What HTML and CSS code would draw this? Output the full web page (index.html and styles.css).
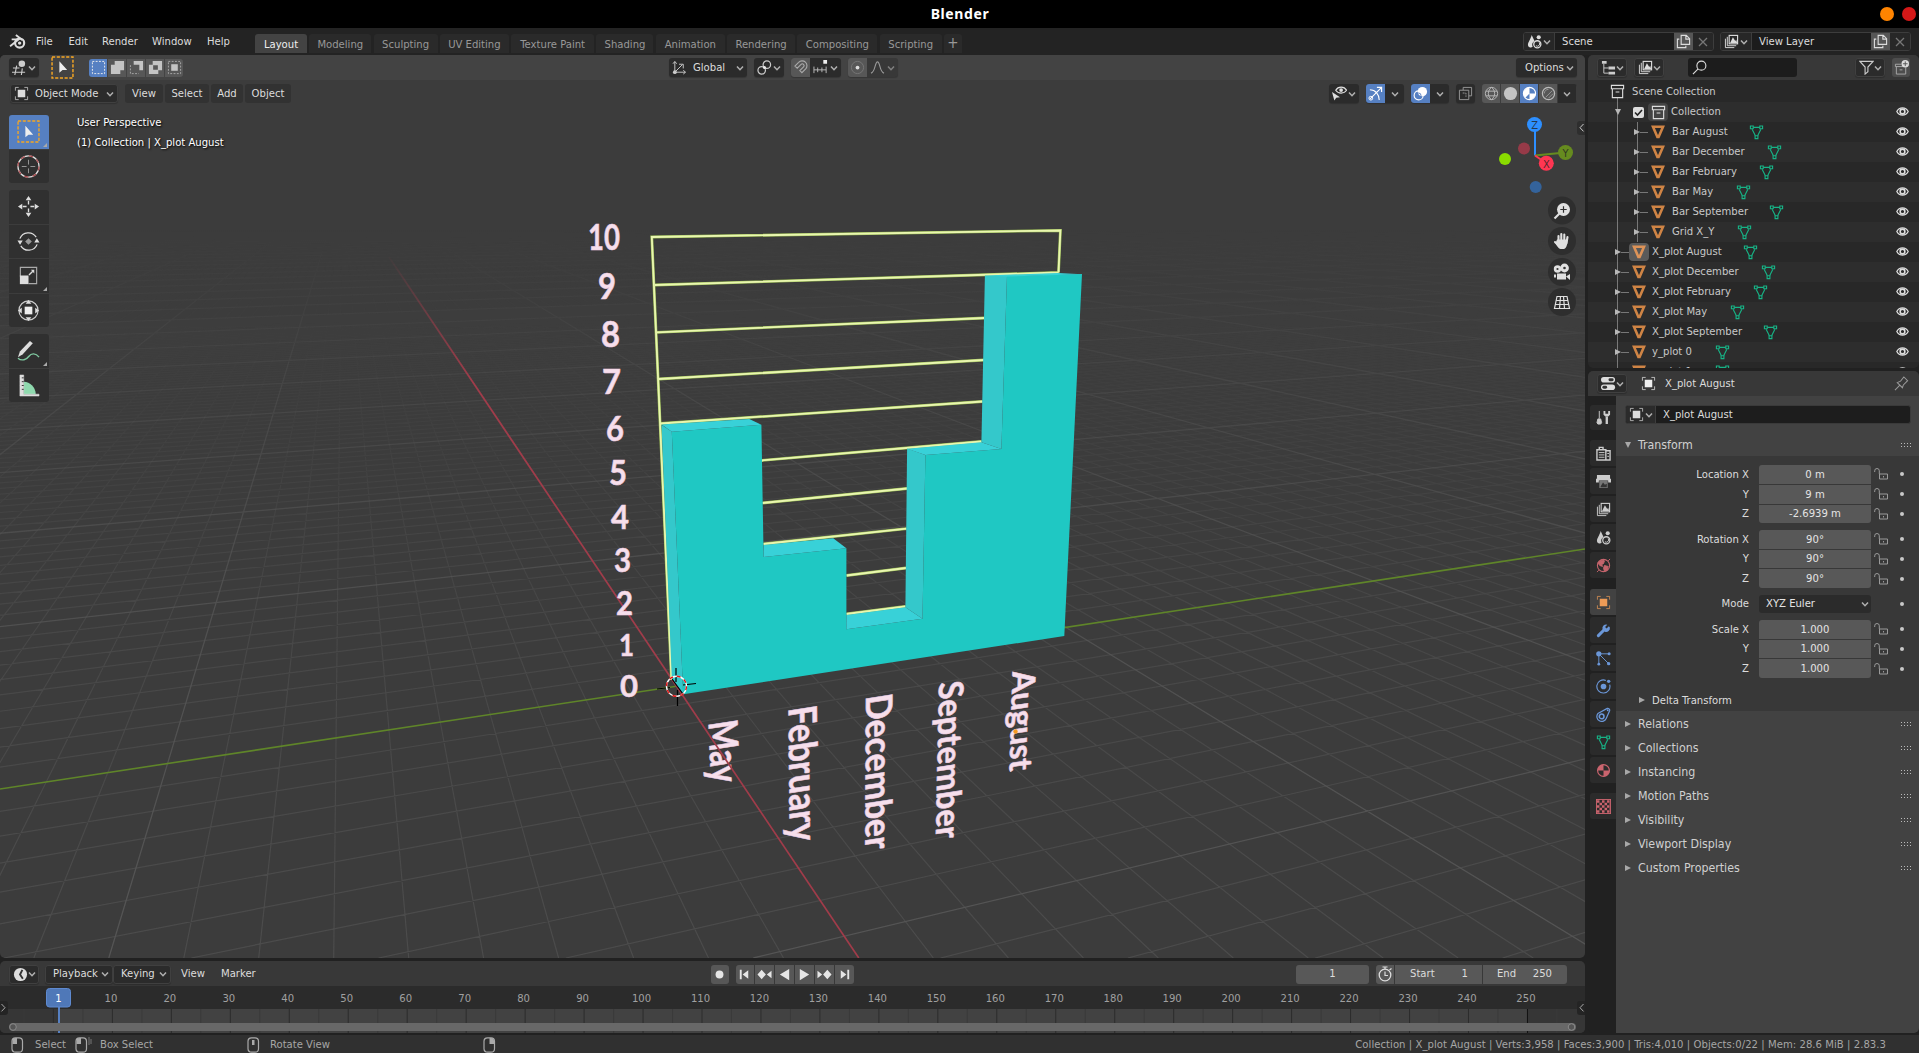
FILE: index.html
```html
<!DOCTYPE html>
<html lang="en">
<head>
<meta charset="utf-8">
<title>Blender</title>
<link rel="stylesheet" href="styles.css">
</head>
<body>
<svg class="defs" width="0" height="0">
  <symbol id="chev" viewBox="0 0 8 8"><path d="M1 2.500l3 3.200 3-3.200" fill="none" stroke="currentColor" stroke-width="1.500"/></symbol>
  <symbol id="scene" viewBox="0 0 16 16"><path d="M5 1C4 5 1 9 1 11.500a3 2.600 0 0 0 5 2.200A5 5 0 0 1 8 7.500z" fill="currentColor"/><circle cx="12.500" cy="3.500" r="2.200" fill="currentColor"/><circle cx="11" cy="11" r="3.800" fill="none" stroke="currentColor" stroke-width="1.400"/><path d="M9.500 12.500a2.500 2.500 0 0 0 3.500-3.500" fill="none" stroke="currentColor"/></symbol>
  <symbol id="layers" viewBox="0 0 16 16"><path d="M1.500 5v9.500H11M3.500 3v9.500H13" fill="none" stroke="currentColor"/><rect x="5.500" y="1.500" width="9" height="9" fill="none" stroke="currentColor" stroke-width="1.200"/><path d="M6.500 9.500l3-6 2.500 4 1-1.500 1 3.500z" fill="currentColor"/></symbol>
  <symbol id="copy" viewBox="0 0 16 16"><path d="M5.500 1.500h5.500l3.500 3.500v6h-9zM10.500 1.500v4h4" fill="none" stroke="currentColor" stroke-width="1.200"/><path d="M3.500 5.500h-2v9h9v-2" fill="none" stroke="currentColor" stroke-width="1.200"/></symbol>
  <symbol id="cross" viewBox="0 0 10 10"><path d="M1 1l8 8M9 1l-8 8" stroke="currentColor" stroke-width="1.300"/></symbol>
  <symbol id="object" viewBox="0 0 16 16"><rect x="4" y="4" width="8" height="8" fill="currentColor"/><path d="M1.500 5V1.500H5M11 1.500h3.500V5M14.500 11v3.500H11M5 14.500H1.500V11" fill="none" stroke="currentColor" opacity=".75"/></symbol>
  <symbol id="coll" viewBox="0 0 16 16"><path d="M1.500 1.500h13v3.500h-13zM2.500 5v9.500h11V5M6 8.500h4" fill="none" stroke="currentColor" stroke-width="1.200"/></symbol>
  <symbol id="mesh" viewBox="0 0 16 16"><path d="M3 2.800h10L8.600 13H7.400z" fill="none" stroke="currentColor" stroke-width="2.600"/></symbol>
  <symbol id="data" viewBox="0 0 16 16"><path d="M4.500 2.500h7M3.300 4.500l3.500 7M12.700 4.500l-3.500 7" fill="none" stroke="currentColor" stroke-width="1.200"/><path d="M1.500 1h3v3h-3zM11.500 1h3v3h-3zM6.500 11.500h3v3h-3z" fill="none" stroke="currentColor" stroke-width="1.200"/></symbol>
  <symbol id="eye" viewBox="0 0 14 12"><path d="M.8 6C3.500.8 10.500.8 13.200 6 10.500 11.200 3.500 11.200.8 6z" fill="none" stroke="currentColor" stroke-width="1.400"/><circle cx="7" cy="6" r="2.600" fill="none" stroke="currentColor" stroke-width="1.700"/></symbol>
  <symbol id="lock" viewBox="0 0 14 12"><path d="M.7 4V2.800a2.300 2.300 0 0 1 4.600 0V6M5.500 6h8v5h-8zM9.500 8v1.500" fill="none" stroke="currentColor"/></symbol>
  <symbol id="grip" viewBox="0 0 11 5"><path d="M0 .5h11M0 3.500h11" stroke="currentColor" stroke-dasharray="1 2"/></symbol>
  <symbol id="wrench" viewBox="0 0 16 16"><path d="M2.500 13.500l6-6" stroke="currentColor" stroke-width="3.200" stroke-linecap="round"/><path d="M13.700 3.500l-2.400 2.400-1.600-1.600 2.300-2.500a4 4 0 0 0-5 5l2.500 2.500a4 4 0 0 0 5.300-4.500z" fill="currentColor"/></symbol>
  <symbol id="mat" viewBox="0 0 16 16"><circle cx="8" cy="8" r="6.300" fill="none" stroke="currentColor" stroke-width="1.300"/><path d="M8 1.500V8H1.500A6.500 6.500 0 0 1 8 1.500zM8 8h6.500A6.500 6.500 0 0 1 8 14.500z" fill="currentColor"/></symbol>
</svg>

<header class="title"><b>Blender</b><i class="dot amber"></i><i class="dot red"></i></header>

<nav class="topbar">
  <svg class="logo" viewBox="0 0 16 16"><circle cx="10" cy="9.500" r="4.300" fill="none" stroke="#ddd" stroke-width="2"/><circle cx="10" cy="9.500" r="1.600" fill="#ddd"/><path d="M1 12.500L9 6H2.500M6.500 1.800l6 4.700" fill="none" stroke="#ddd" stroke-width="1.800"/></svg>
  <div class="menus"><span>File</span><span>Edit</span><span>Render</span><span>Window</span><span>Help</span></div>
  <div class="tabs"><span class="on w52">Layout</span><span class="w62">Modeling</span><span class="w64">Sculpting</span><span class="w69">UV Editing</span><span class="w83">Texture Paint</span><span class="w57">Shading</span><span class="w69">Animation</span><span class="w68">Rendering</span><span class="w80">Compositing</span><span class="w62">Scripting</span><span class="w18 plus">+</span></div>
  <div class="idblocks">
    <div class="idblock"><span class="pick"><svg class="ic"><use href="#scene"/></svg><svg class="chev"><use href="#chev"/></svg></span><span class="idname">Scene</span><span class="copy"><svg class="ic"><use href="#copy"/></svg></span><span class="close"><svg><use href="#cross"/></svg></span></div>
    <div class="idblock"><span class="pick"><svg class="ic"><use href="#layers"/></svg><svg class="chev"><use href="#chev"/></svg></span><span class="idname">View Layer</span><span class="copy"><svg class="ic"><use href="#copy"/></svg></span><span class="close"><svg><use href="#cross"/></svg></span></div>
  </div>
</nav>

<main class="main">
  <div class="left">
    <section class="viewport">
      <div class="toolhead">
        <span class="btn w30"><svg class="ic" viewBox="0 0 16 16"><path d="M1 8.500h7M0 13h14M5 6L3 16M11 9l-1 7" stroke="#ccc" fill="none" stroke-width="1.200"/><circle cx="10.500" cy="4" r="3.500" fill="#ccc"/></svg><svg class="chev"><use href="#chev"/></svg></span>
        <svg class="seltool" viewBox="0 0 22 22"><rect x="1" y="1" width="20" height="20" fill="none" stroke="#f5a623" stroke-width="1.400" stroke-dasharray="3 1.500"/><path d="M8 5v11l3-2.500h4.500z" fill="#eee"/></svg>
        <div class="seg">
          <span class="on"><svg viewBox="0 0 16 16"><rect x="1.500" y="1.500" width="13" height="13" fill="none" stroke="#eee" stroke-dasharray="2 1.500"/></svg></span>
          <span><svg viewBox="0 0 16 16"><path d="M5 1h10v10h-4v4H1V5h4z" fill="#c4c4c4"/></svg></span>
          <span><svg viewBox="0 0 16 16"><path d="M5 1h10v10h-4V5H5z" fill="#c4c4c4"/><path d="M1.500 5.500v9h9" fill="none" stroke="#aaa" stroke-dasharray="2 1.500"/></svg></span>
          <span><svg viewBox="0 0 16 16"><path d="M5 1h10v10h-4v4H1V5h4zM5.500 5.500v5h5v-5z" fill="#c4c4c4" fill-rule="evenodd"/></svg></span>
          <span><svg viewBox="0 0 16 16"><rect x="4.500" y="4.500" width="7" height="7" fill="#c4c4c4"/><rect x="1.500" y="1.500" width="13" height="13" fill="none" stroke="#aaa" stroke-dasharray="2 1.500"/></svg></span>
        </div>
        <div class="center">
          <span class="btn w78"><svg class="ic" viewBox="0 0 16 16"><path d="M3 14V2M1 4l2-2.500L5 4M3 13h11M12 11l2.500 2-2.500 2M3 13l8-8M7.500 4.500H12V9" fill="none" stroke="#ccc"/><circle cx="3" cy="13" r="2" fill="#ccc"/></svg><em>Global</em><svg class="chev"><use href="#chev"/></svg></span>
          <span class="btn w30"><svg class="ic" viewBox="0 0 16 16"><circle cx="10.500" cy="5" r="4" fill="none" stroke="#ccc" stroke-width="1.300"/><circle cx="5" cy="11" r="4" fill="none" stroke="#ccc" stroke-width="1.300"/><circle cx="8" cy="8" r="1.600" fill="#eee"/></svg><svg class="chev"><use href="#chev"/></svg></span>
          <span class="btn w50"><span class="tog"><svg class="ic" viewBox="0 0 16 16"><path d="M2 6.500l4-4a4.800 4.800 0 0 1 7.500 7l-4 4-2.200-2.200 4-4a1.700 1.700 0 0 0-2.700-2.600L4.500 8.700z" fill="none" stroke="#aaa" stroke-width="1.200"/></svg></span><svg class="ic" viewBox="0 0 16 16"><path d="M1 7v7M1 10.500h13M5 8v5M9.500 8v5M14 7v7" stroke="#bbb" fill="none"/><rect x="11" y="0" width="4" height="4" fill="#eee"/></svg><svg class="chev"><use href="#chev"/></svg></span>
          <span class="btn w50 dim"><span class="tog"><svg class="ic" viewBox="0 0 16 16"><circle cx="8" cy="8" r="6.500" fill="none" stroke="#777"/><circle cx="8" cy="8" r="2" fill="#ddd"/></svg></span><svg class="ic" viewBox="0 0 16 16"><path d="M1 14C6 13 5 2 8 2s2 11 7 12" fill="none" stroke="#999" stroke-width="1.200"/></svg><svg class="chev"><use href="#chev"/></svg></span>
        </div>
        <span class="btn w61 options"><em>Options</em><svg class="chev"><use href="#chev"/></svg></span>
      </div>

      <div class="scene">
        <svg class="canvas" viewBox="0 80 1585 878">
          <defs>
            <linearGradient id="fadeA" gradientUnits="userSpaceOnUse" x1="0" y1="80" x2="0" y2="958"><stop offset=".21" stop-color="#000"/><stop offset=".38" stop-color="#444"/><stop offset=".62" stop-color="#bbb"/><stop offset="1" stop-color="#fff"/></linearGradient>
            <linearGradient id="fadeB" gradientUnits="userSpaceOnUse" x1="0" y1="80" x2="0" y2="958"><stop offset=".17" stop-color="#000"/><stop offset=".35" stop-color="#666"/><stop offset=".6" stop-color="#ccc"/><stop offset="1" stop-color="#fff"/></linearGradient>
            <linearGradient id="redfade" gradientUnits="userSpaceOnUse" x1="0" y1="252" x2="0" y2="380"><stop offset="0" stop-color="#a03c4a" stop-opacity="0"/><stop offset="1" stop-color="#a03c4a"/></linearGradient>
            <mask id="mA" maskUnits="userSpaceOnUse" x="0" y="80" width="1585" height="878"><rect x="0" y="80" width="1585" height="878" fill="url(#fadeA)"/></mask>
            <mask id="mB" maskUnits="userSpaceOnUse" x="0" y="80" width="1585" height="878"><rect x="0" y="80" width="1585" height="878" fill="url(#fadeB)"/></mask>
            <path id="frame" d="M671.500 680L651.800 237 1060.400 230.500 1058.500 272.500M655 285L1058.500 272.500M657 332.300L984.500 318M659 379L984 360M661 423.500L982.500 401.500M761.500 460.500L981.500 441.500M762.500 503L907 488.500M763.500 544L906.500 528.700M846.500 575.500L906 568M846.500 614L905.500 606.300"/>
          </defs>
          <g mask="url(#mA)"><path id="minor" class="minor"/></g>
          <g mask="url(#mB)"><path id="major" class="major"/></g>
          <path d="M0 789L676.500 686.200 1585 549" class="axis-y"/>
          <g class="month">
            <text font-size="40" textLength="62" lengthAdjust="spacingAndGlyphs" transform="matrix(.04 1 -1 .155 708.500 722.500)">May</text>
            <text font-size="39" textLength="135" lengthAdjust="spacingAndGlyphs" transform="matrix(.01 1 -1 .155 788.500 708)">February</text>
            <text font-size="36.500" textLength="155" lengthAdjust="spacingAndGlyphs" transform="matrix(-.005 1 -1 .16 866 696)">December</text>
            <text font-size="34" textLength="157" lengthAdjust="spacingAndGlyphs" transform="matrix(-.02 1 -1 .15 939 683)">September</text>
            <text font-size="32" textLength="100" lengthAdjust="spacingAndGlyphs" transform="matrix(-.03 1 -1 .15 1012.500 672)">August</text>
          </g>
          <path d="M389 257L676.500 686.200" stroke="url(#redfade)" class="axis-x"/>
          <path d="M676.500 686.200L858.800 958" stroke="#a03c4a" class="axis-x"/>
          <g class="digits">
            <text x="588" y="250" font-size="37" textLength="32" lengthAdjust="spacingAndGlyphs">10</text>
            <text x="598" y="298.500" font-size="36" textLength="18" lengthAdjust="spacingAndGlyphs">9</text>
            <text x="601" y="346.500" font-size="35.500" textLength="19" lengthAdjust="spacingAndGlyphs">8</text>
            <text x="602" y="394" font-size="35" textLength="19" lengthAdjust="spacingAndGlyphs">7</text>
            <text x="606" y="441" font-size="34" textLength="18" lengthAdjust="spacingAndGlyphs">6</text>
            <text x="609" y="485" font-size="34" textLength="18" lengthAdjust="spacingAndGlyphs">5</text>
            <text x="611" y="528.500" font-size="33" textLength="18" lengthAdjust="spacingAndGlyphs">4</text>
            <text x="614" y="572" font-size="32" textLength="17" lengthAdjust="spacingAndGlyphs">3</text>
            <text x="616" y="615" font-size="32" textLength="17" lengthAdjust="spacingAndGlyphs">2</text>
            <text x="619" y="655.500" font-size="31" textLength="15" lengthAdjust="spacingAndGlyphs">1</text>
            <text x="620" y="696.500" font-size="31" textLength="18" lengthAdjust="spacingAndGlyphs">0</text>
          </g>
          <use href="#frame" class="frame-edge"/>
          <use href="#frame" class="frame-core"/>
          <path fill="#1fc8c3" d="M671.800 431.700L761.400 424.700 763.600 557 846.400 548.300V629.300L922.500 618.700 925.400 455 1001.400 449 1007 276 1082 274 1064.300 636 683.200 694.300z"/>
          <path fill="#34c8cb" d="M661.500 424.700L671.800 431.700 683.200 694.300 671.800 678zM907.100 448.500L925.400 455 922.500 618.700 905.400 607.300zM984.900 275.500L1007 276 1001.400 449 981.400 442.300z"/>
          <path fill="#38d1d8" d="M661.500 424.500L749.300 419 761.400 424.700 671.800 431.700zM763.600 545L833.200 538.200 846.400 548.300 763.600 557zM846.400 615L905.400 607.300 922.500 618.700 846.400 629.300zM907.100 448.800L981.400 442.300 1001.400 449 925.400 455zM984.900 275.500L1058 273 1082 274.300 1007 276.500z"/>
          <g fill="none"><path d="M676 668v14M677.500 690v16M657 689l13-1.500M683 685l13-1.500M672 679l11 15" stroke="#000" stroke-width="1.200"/><circle cx="676.500" cy="686.300" r="10" stroke="#fff" stroke-width="1.400"/><circle cx="676.500" cy="686.300" r="10" stroke="#e01616" stroke-width="1.400" stroke-dasharray="3.900 3.950"/></g>
          <circle cx="1015.500" cy="731.500" r="2.200" fill="#f59a23"/>

          <g class="gizmo"><path d="M1535 155.500V128" stroke="#2d8fff"/><path d="M1535 155.500L1560 153" stroke="#668b1f"/><path d="M1535 155.500L1543 161" stroke="#ff3652"/>
            <circle cx="1524" cy="148.500" r="6" fill="#963a48"/><circle cx="1505" cy="159" r="6" fill="#8adb00"/><circle cx="1535.700" cy="187" r="6" fill="#34639b"/>
            <circle cx="1565.500" cy="152.500" r="7.500" fill="#668b1f"/><circle cx="1534.500" cy="124.500" r="7.500" fill="#2d8fff"/><circle cx="1546.300" cy="163.300" r="7.500" fill="#ff3652"/>
            <text x="1534.700" y="128.700">Z</text><text x="1565.600" y="156.700">Y</text><text x="1546.500" y="167.500">X</text></g>
          <g fill="#2e2e2e"><circle cx="1562" cy="210.500" r="14"/><circle cx="1562" cy="241" r="14"/><circle cx="1562" cy="272" r="14"/><circle cx="1562" cy="302" r="14"/><path d="M1585 121h-5a3 3 0 0 0-3 3v8a3 3 0 0 0 3 3h5z"/></g>
          <g fill="#e0e0e0"><circle cx="1563.500" cy="209.500" r="6.500"/><path d="M1559.500 213.500l-5 5" stroke="#e0e0e0" stroke-width="2.200"/><path d="M1560.300 209.500h6.400M1563.500 206.300v6.400" stroke="#2e2e2e" stroke-width="1.200"/>
            <path d="M1558.500 236v5M1561.300 234v7M1564.300 234.500v7M1567.500 237l-1 6M1555 242l4 4" stroke="#e0e0e0" stroke-width="2.100" stroke-linecap="round" fill="none"/><path d="M1557 239.500h10.500c0 4-.8 9-3.500 9.500h-3.500c-2 0-4.500-4.500-5-6z"/>
            <circle cx="1557.500" cy="269" r="3.700"/><circle cx="1564.500" cy="268" r="4.400"/><path d="M1557 273.500h9v6h-9zM1554 274.500h2v3h-2zM1566 276.500l4-2.500v6z"/><circle cx="1557.500" cy="269" r="1.100" fill="#333"/><circle cx="1564.500" cy="268" r="1.300" fill="#333"/>
            <path d="M1557 296.500h10l2.500 12h-15zM1556 300.500h12M1555 304.500h14M1560.500 296.500l-1 12M1563.500 296.500l1 12" fill="none" stroke="#e0e0e0" stroke-width="1.200"/></g>
          <path d="M1583.500 124l-3.500 3.700 3.500 3.700" fill="none" stroke="#ccc"/>
        </svg>
        <div class="overlay">
          <div class="modehead">
            <span class="btn w108 bord"><svg class="ic"><use href="#object"/></svg><em>Object Mode</em><svg class="chev"><use href="#chev"/></svg></span>
            <span class="mb w38">View</span><span class="mb w44">Select</span><span class="mb w32">Add</span><span class="mb w46">Object</span>
            <div class="modes">
              <span class="btn w30"><svg class="ic" viewBox="0 0 16 16"><path d="M4 4.500c2.500-4.500 9-4.500 11.500 0-2.500 4-9 4-11.500 0z" fill="none" stroke="#ddd" stroke-width="1.300"/><circle cx="9.700" cy="4.300" r="2" fill="#ddd"/><path d="M0 6.500l2.500 9 2-3 4-.5z" fill="#ddd"/></svg><svg class="chev"><use href="#chev"/></svg></span>
              <span class="btn w38x"><span class="tog on"><svg class="ic" viewBox="0 0 16 16"><path d="M2 14L14 2M9.500 1.500h5v5M2 4c6 0 10 5 10 11" fill="none" stroke="#fff" stroke-width="1.200"/><circle cx="3" cy="13" r="2" fill="none" stroke="#fff"/></svg></span><svg class="chev"><use href="#chev"/></svg></span>
              <span class="btn w38x"><span class="tog on"><svg class="ic" viewBox="0 0 16 16"><circle cx="10" cy="6" r="5" fill="#fff"/><circle cx="6" cy="10" r="4.800" fill="none" stroke="#fff" stroke-width="1.200"/><circle cx="6" cy="10" r="2.500" fill="none" stroke="#5680c2"/></svg></span><svg class="chev"><use href="#chev"/></svg></span>
              <span class="btn w19"><svg class="ic" viewBox="0 0 16 16"><path d="M5.500 4.500v-3h9v9h-3M1.500 4.500h10v10h-10z" fill="none" stroke="#999"/><path d="M5 7.500h3.500v4" fill="none" stroke="#999" stroke-dasharray="2 1"/></svg></span>
              <div class="shade"><span><svg class="ic" viewBox="0 0 16 16"><path d="M8 1.500a6.500 6.500 0 1 0 .01 0zC3.500 5 3.500 11 8 14.500 12.500 11 12.500 5 8 1.500M2 5.500h12M2 10.500h12" fill="none" stroke="#bbb"/></svg></span><span><svg class="ic" viewBox="0 0 16 16"><circle cx="8" cy="8" r="7" fill="#c4c4c4"/></svg></span><span class="on"><svg class="ic" viewBox="0 0 16 16"><circle cx="8" cy="8" r="6.500" fill="none" stroke="#fff" stroke-width="1.200"/><path d="M8 1.500V8L3.500 12.500A6.500 6.500 0 0 1 8 1.500zM8 8h6.500A6.500 6.500 0 0 1 8 14.500z" fill="#fff"/></svg></span><span><svg class="ic" viewBox="0 0 16 16"><circle cx="8" cy="8" r="6.500" fill="none" stroke="#bbb" stroke-width="1.300"/><path d="M3.500 8A4.500 4.500 0 0 1 8 3.500M5 12l7-7M8 13l5-5" fill="none" stroke="#999"/></svg></span><span class="dk"><svg class="chev"><use href="#chev"/></svg></span></div>
            </div>
          </div>
          <div class="under">
            <div class="tools">
              <div class="tg">
                <span class="tool on"><svg viewBox="0 0 22 22"><rect x="1" y="1" width="20" height="20" fill="none" stroke="#f5a623" stroke-width="1.300" stroke-dasharray="3 1.500"/><path d="M8 5.500v11l3-2.500h4.500z" fill="#eee"/></svg><i></i></span>
                <span class="tool"><svg viewBox="0 0 24 24"><circle cx="12" cy="12" r="11" fill="none" stroke="#ddd" stroke-width="1.300"/><circle cx="12" cy="12" r="11" fill="none" stroke="#a9484c" stroke-width="1.300" stroke-dasharray="4.300 4.340"/><path d="M12 5v5M12 14v5M5 12h5M14 12h5" stroke="#999"/></svg></span>
              </div>
              <div class="tg">
                <span class="tool"><svg viewBox="0 0 24 24"><path d="M12 1l3 4.500H9zM12 23l3-4.500H9zM1 12l4.500-3v6zM23 12l-4.500-3v6z" fill="#ddd"/><path d="M12 6v4M12 14v4M6 12h4M14 12h4" stroke="#ddd" stroke-width="1.400"/></svg></span>
                <span class="tool"><svg viewBox="0 0 24 24"><path d="M3 9a9.500 9.500 0 0 1 17-1.500M21 15a9.500 9.500 0 0 1-17 1.500" fill="none" stroke="#ddd" stroke-width="1.300"/><path d="M.5 11h5.500l-2.800 4.500zM18 13h5.500l-2.800-4.500z" fill="#ddd"/><path d="M12 8.500l3.500 3.500-3.500 3.500L8.500 12z" fill="#999"/></svg></span>
                <span class="tool"><svg viewBox="0 0 24 24"><path d="M3.500 13V3.500h17v17H12" fill="none" stroke="#aaa" stroke-width="1.200"/><rect x="3" y="12" width="9" height="9" fill="#ddd"/><path d="M12.500 11.500l4-4" stroke="#ddd" stroke-width="1.400"/><path d="M14.500 6H18v4z" fill="#ddd"/></svg><i></i></span>
                <span class="tool"><svg viewBox="0 0 24 24"><circle cx="12" cy="12" r="10" fill="none" stroke="#ccc" stroke-width="1.200"/><path d="M12 1l3 4H9zM12 23l3-4H9zM1 12l4-3v6zM23 12l-4-3v6z" fill="#ddd"/><rect x="8" y="8" width="8" height="8" fill="#eee"/></svg></span>
              </div>
              <div class="tg">
                <span class="tool"><svg viewBox="0 0 24 24"><path d="M1 20c4 3.500 9 1.500 11.500-2s7-3.500 10.500 1" fill="none" stroke="#7fc8a0" stroke-width="1.400"/><path d="M1 19L3 13 13.500 2l3 2.500L6 16z" fill="#ddd"/></svg><i></i></span>
                <span class="tool"><svg viewBox="0 0 24 24"><path d="M7 8a13 13 0 0 1 12.500 13H7z" fill="#8fd9ae"/><path d="M3 1h4v20h16v2H3zM3 4h3M3 8h3M3 12h3" fill="#ddd" stroke="#ddd" stroke-width=".5"/><path d="M5 4h2M5 8h2M5 12h2M5 16h2" stroke="#333"/></svg></span>
              </div>
            </div>
            <div class="info"><p>User Perspective</p><p>(1) Collection | X_plot August</p></div>
          </div>
        </div>
      </div>
    </section>

    <section class="timeline">
      <div class="tlhead">
        <span class="btn w30 bord"><svg class="ic" viewBox="0 0 16 16"><circle cx="8" cy="8" r="7" fill="#ddd"/><path d="M10 3L7.500 8l3 4.500" fill="none" stroke="#333" stroke-width="2"/></svg><svg class="chev"><use href="#chev"/></svg></span>
        <div class="pk"><span class="btn w68 bord"><em>Playback</em><svg class="chev"><use href="#chev"/></svg></span><span class="btn w58 bord"><em>Keying</em><svg class="chev"><use href="#chev"/></svg></span></div>
        <span class="tlm v">View</span><span class="tlm m">Marker</span>
        <div class="play">
          <span class="rec"><svg viewBox="0 0 16 16"><circle cx="8" cy="8" r="4.200"/></svg></span>
          <div class="transport">
            <span><svg viewBox="0 0 16 16"><path d="M3 3h2v10H3zM12 3.500v9L6 8z"/></svg></span>
            <span><svg viewBox="0 0 16 16"><path d="M5 3l4.500 5L5 13 .5 8zM15.500 4v8L10.500 8z"/></svg></span>
            <span><svg viewBox="0 0 16 16"><path d="M13 2v12L3 8z"/></svg></span>
            <span><svg viewBox="0 0 16 16"><path d="M3 2v12l10-6z"/></svg></span>
            <span><svg viewBox="0 0 16 16"><path d="M11 3l4.500 5L11 13 6.500 8zM.5 4v8l5-4z"/></svg></span>
            <span><svg viewBox="0 0 16 16"><path d="M11 3h2v10h-2zM4 3.500v9L10 8z"/></svg></span>
          </div>
        </div>
        <div class="frames"><span class="cur">1</span><div class="range"><span class="clock"><svg viewBox="0 0 16 16"><circle cx="8" cy="9" r="5.800" fill="none" stroke="#ddd" stroke-width="1.300"/><path d="M8 5.500V9.500h3M8 3V1M5.500 1h5M12.500 4l2-1.500" fill="none" stroke="#ddd" stroke-width="1.200"/></svg></span><span class="rs"><em>Start</em><em>1</em></span><span class="re"><em>End</em><em>250</em></span></div></div>
      </div>
      <svg class="ruler" width="1585" height="47" viewBox="0 986 1585 47">
        <rect x="0" y="986" width="1585" height="23" fill="#2b2b2b"/><rect x="0" y="1009" width="1585" height="24" fill="#363636"/><rect x="59" y="1009" width="1468" height="24" fill="#424242"/>
        <g id="ticks"></g>
        <path d="M59 1007v26" stroke="#5680c2" stroke-width="2"/><rect x="46.500" y="988.500" width="24" height="18.500" rx="3" fill="#4f78b8" stroke="#5f8ad0"/><text x="58.500" y="1002.300" class="now">1</text>
        <rect x="9" y="1023" width="1567" height="8" rx="4" fill="#686868"/><circle cx="13" cy="1027" r="3.300" fill="#555" stroke="#8a8a8a"/><circle cx="1571.500" cy="1027" r="3.300" fill="#555" stroke="#8a8a8a"/>
        <path d="M0 1001h5a3 3 0 0 1 3 3v8a3 3 0 0 1-3 3H0zM1585 1001h-5a3 3 0 0 0-3 3v8a3 3 0 0 0 3 3h5z" fill="#242424"/><path d="M1.500 1004l3.500 3.700-3.500 3.700M1583.500 1004l-3.500 3.700 3.500 3.700" fill="none" stroke="#aaa"/>
      </svg>
    </section>
  </div>

  <div class="right">
    <section class="outliner">
      <div class="ohead">
        <span class="btn w30 bord"><svg class="ic" viewBox="0 0 16 16"><path d="M1 1h5v3H1zM8 7h7v3H8zM8 12.500h7v3H8z" fill="#ccc"/><path d="M3 4v10h5M3 8.500h5" fill="none" stroke="#ccc"/></svg><svg class="chev"><use href="#chev"/></svg></span>
        <span class="btn w30 bord"><svg class="ic"><use href="#layers"/></svg><svg class="chev"><use href="#chev"/></svg></span>
        <span class="search"><svg class="ic" viewBox="0 0 16 16"><circle cx="10" cy="6" r="4.800" fill="none" stroke="#ddd" stroke-width="1.200"/><path d="M6.500 9.500L1 15" stroke="#ddd" stroke-width="1.200"/></svg></span>
        <span class="btn w30 bord filter"><svg class="ic" viewBox="0 0 16 16"><path d="M1 1.500h14l-5.500 6v5L6.500 15V7.500z" fill="none" stroke="#ccc" stroke-width="1.200"/></svg><svg class="chev"><use href="#chev"/></svg></span>
        <span class="newc"><svg class="ic" viewBox="0 0 16 16"><path d="M8 4.500H1.500V7H14M2.500 7v8h10V8M6 10.500h3" fill="none" stroke="#aaa"/><circle cx="12" cy="4" r="4" fill="#ddd"/><path d="M9.500 4h5M12 1.500v5" stroke="#555"/></svg></span>
      </div>
      <div class="tree" id="tree"></div>
    </section>

    <section class="props">
      <div class="phead"><span class="btn w30 bord"><svg class="ic" viewBox="0 0 16 16"><rect x="0" y="1" width="15" height="6" rx="3" fill="#ddd"/><rect x="0" y="9" width="15" height="6" rx="3" fill="#ddd"/><rect x="8" y="2.500" width="5.500" height="3" rx="1.500" fill="#333"/><rect x="1.500" y="10.500" width="5" height="3" rx="1.500" fill="#333"/></svg><svg class="chev"><use href="#chev"/></svg></span><svg class="ic obj"><use href="#object"/></svg><span class="pname">X_plot August</span><svg class="pin" viewBox="0 0 16 16"><path d="M1 15l5-5M3.500 7l5.500 5.500 1-3L14.500 5l-4-4L7 5.500z" fill="none" stroke="#999" stroke-width="1.100"/></svg></div>
      <div class="pbody">
        <div class="ptabs">
          <span class="gap"><svg viewBox="0 0 16 16"><path d="M3.500 1v8M2 9.500h3l1 4-1 1.500H2L1 13.500z" fill="#ccc" stroke="#ccc"/><path d="M11.500 7v8" stroke="#ccc" stroke-width="2.500"/><path d="M8 1v4l2 2h3l2-2V1l-2 0v3h-3V1z" fill="#ccc"/></svg></span>
          <span><svg viewBox="0 0 16 16"><path d="M1 4h9.500v11H1zM3.500 4V1.500h4V4M11 5h4v10h-4" fill="none" stroke="#ccc" stroke-width="1.500"/><path d="M3 7h6M3 9.500h6M3 12h6M12 8h2M12 11h2" stroke="#ccc"/></svg></span>
          <span><svg viewBox="0 0 16 16"><path d="M1 1h14v4H1zM0 5h16v4h-3V7H3v2H0z" fill="#ccc"/><path d="M3.500 7h9v8h-9z" fill="#777"/><path d="M5 13l2.500-4 2 2.500 2-1V14H5z" fill="#333"/></svg></span>
          <span><svg class="cc"><use href="#layers"/></svg></span>
          <span><svg class="cc"><use href="#scene"/></svg></span>
          <span class="gap"><svg viewBox="0 0 16 16"><circle cx="8" cy="8" r="6.500" fill="none" stroke="#c4646c" stroke-width="1.200"/><path d="M2 5l4-3 3 1-1 3-2 1 1 2-3-1zM9 8l4 1-1 4-3 1-1-3zM1 15l2-2M15 1l-2 2" fill="#c4646c" stroke="#c4646c"/></svg></span>
          <span class="on"><svg class="or"><use href="#object"/></svg></span>
          <span><svg class="bl"><use href="#wrench"/></svg></span>
          <span><svg class="bl" viewBox="0 0 16 16"><circle cx="3" cy="3" r="2.800" fill="currentColor"/><path d="M3 3h11M3 3l10 10M3 3v11" stroke="currentColor"/><circle cx="14" cy="3" r="1.600" fill="currentColor"/><circle cx="13.500" cy="13.500" r="1.800" fill="currentColor"/><circle cx="3" cy="14" r="1.500" fill="currentColor"/></svg></span>
          <span><svg class="bl" viewBox="0 0 16 16"><path d="M10.500 1.500A7 7 0 1 0 14.600 6" fill="none" stroke="currentColor" stroke-width="1.200"/><circle cx="8" cy="8" r="3" fill="currentColor"/><circle cx="13.500" cy="2.500" r="1.800" fill="currentColor"/></svg></span>
          <span><svg class="bl" viewBox="0 0 16 16"><path d="M2 7l10-5.500a2 2 0 0 1 2.500 2.500L11 12a5.200 5.200 0 1 1-9-5z" fill="none" stroke="currentColor" stroke-width="1.300"/><circle cx="6" cy="10" r="2.500" fill="none" stroke="currentColor" stroke-width="1.700"/><circle cx="12.500" cy="3.500" r="1" fill="currentColor"/></svg></span>
          <span><svg class="gr"><use href="#data"/></svg></span>
          <span class="gap"><svg class="pk2"><use href="#mat"/></svg></span>
          <span><svg class="pk2" viewBox="0 0 16 16"><rect x=".5" y=".5" width="15" height="15" fill="none" stroke="currentColor"/><path d="M1 2.700h14M1 8h14M1 13.300h14" stroke="currentColor" stroke-width="2.700" stroke-dasharray="2.700 2.700"/><path d="M3.700 5.300h11.300M3.700 10.700h11.300" stroke="currentColor" stroke-width="2.700" stroke-dasharray="2.700 2.700"/></svg></span>
        </div>
        <div class="panels">
          <div class="namerow"><span class="pick"><svg class="ic"><use href="#object"/></svg><svg class="chev"><use href="#chev"/></svg></span><span class="field">X_plot August</span></div>
          <div class="ph open"><i class="tri down"></i><span>Transform</span><svg class="grip"><use href="#grip"/></svg></div>
          <div class="tbody" id="tbody"></div>
          <div class="plist">
            <div class="ph"><i class="tri"></i><span>Relations</span><svg class="grip"><use href="#grip"/></svg></div>
            <div class="ph"><i class="tri"></i><span>Collections</span><svg class="grip"><use href="#grip"/></svg></div>
            <div class="ph"><i class="tri"></i><span>Instancing</span><svg class="grip"><use href="#grip"/></svg></div>
            <div class="ph"><i class="tri"></i><span>Motion Paths</span><svg class="grip"><use href="#grip"/></svg></div>
            <div class="ph"><i class="tri"></i><span>Visibility</span><svg class="grip"><use href="#grip"/></svg></div>
            <div class="ph"><i class="tri"></i><span>Viewport Display</span><svg class="grip"><use href="#grip"/></svg></div>
            <div class="ph"><i class="tri"></i><span>Custom Properties</span><svg class="grip"><use href="#grip"/></svg></div>
          </div>
        </div>
      </div>
    </section>
  </div>
</main>

<footer class="status">
  <span class="s1"><svg viewBox="0 0 18 16"><rect x="1" y=".8" width="10.500" height="14.400" rx="3.500" fill="none" stroke="#aaa" stroke-width="1.200"/><path d="M1.500 7V4a3 3 0 0 1 3-3H6v6z" fill="#aaa"/></svg>Select</span>
  <span class="s2"><svg viewBox="0 0 18 16"><rect x="1" y=".8" width="10.500" height="14.400" rx="3.500" fill="none" stroke="#aaa" stroke-width="1.200"/><path d="M1.500 7V4a3 3 0 0 1 3-3H6v6z" fill="#aaa"/><path d="M14 0v8M16 2v5" stroke="#777"/></svg>Box Select</span>
  <span class="s3"><svg viewBox="0 0 18 16"><rect x="1" y=".8" width="10.500" height="14.400" rx="3.500" fill="none" stroke="#aaa" stroke-width="1.200"/><rect x="5" y="3" width="2.500" height="5" fill="#aaa"/></svg>Rotate View</span>
  <span class="s4"><svg viewBox="0 0 18 16"><rect x="1" y=".8" width="10.500" height="14.400" rx="3.500" fill="none" stroke="#aaa" stroke-width="1.200"/><path d="M11 7V4a3 3 0 0 0-3-3H6.500v6z" fill="#aaa"/></svg></span>
  <span class="stats">Collection | X_plot August | Verts:3,958 | Faces:3,900 | Tris:4,010 | Objects:0/22 | Mem: 28.6 MiB | 2.83.3</span>
</footer>
<script src="app.js"></script>
</body>
</html>
```
FILE: styles.css
```css
* { box-sizing: border-box; }
body { margin: 0; width: 1919px; height: 1053px; overflow: hidden; background: #212121; color: #dcdcdc; font: 11.2px/1 "DejaVu Sans Condensed", "DejaVu Sans", sans-serif; font-stretch: condensed; display: flex; flex-direction: column; }
.defs { position: absolute; }
em { font-style: normal; }
svg { display: block; flex: none; }
span { white-space: nowrap; }
.ic { width: 15px; height: 15px; }
.chev { width: 8px; height: 8px; color: #b0b0b0; }

.title { height: 28px; background: #000; display: grid; grid-template-columns: 1fr auto auto; align-items: center; padding-right: 3px; column-gap: 8px; flex: none; }
.title b { font: bold 14px "Noto Sans", sans-serif; letter-spacing: .6px; color: #fff; text-align: center; padding-left: 48px; margin-top: -2px; }
.dot { width: 14px; height: 14px; border-radius: 50%; }
.amber { background: #ff8400; }
.red { background: #d41818; }

.topbar { height: 27px; flex: none; display: flex; background: #232323; padding-left: 9px; }
.logo { width: 17px; height: 17px; margin-top: 5px; }
.menus { width: 229px; display: grid; grid-template-columns: 32.5px 33.5px 50px 55px 1fr; padding: 8px 0 0 10px; }
.tabs { display: flex; gap: 2.3px; padding-top: 6px; height: 25px; }
.tabs span { background: #2a2a2a; color: #989898; border-radius: 3px 3px 0 0; display: flex; align-items: center; justify-content: center; padding-top: 2px; }
.tabs .on { background: #434343; color: #eee; }
.tabs .plus { font-size: 15px; padding: 0; }
.idblocks { margin-left: auto; margin-right: 8px; padding-top: 4px; display: flex; gap: 6px; }
.idblock { display: flex; height: 19px; width: 191px; border: 1px solid #3d3d3d; border-radius: 3px; background: #1c1c1c; overflow: hidden; }
.pick { width: 31px; background: #272727; display: flex; align-items: center; justify-content: space-around; padding: 0 2px; border-right: 1px solid #3d3d3d; }
.idname { flex: 1; padding: 3px 7px; }
.copy { width: 19px; background: #565656; display: grid; place-items: center; }
.close { width: 20px; background: #272727; display: grid; place-items: center; color: #777; }
.close svg { width: 10px; height: 10px; }

.main { height: 980px; display: flex; gap: 3px; flex: none; }
.left { width: 1585px; display: flex; flex-direction: column; gap: 3px; }
.right { flex: 1; display: flex; flex-direction: column; gap: 3px; }
.viewport { height: 903px; border-radius: 5px; overflow: hidden; background: #3c3c3c; }
.toolhead { height: 25px; background: #434343; display: flex; align-items: center; padding: 0 8px 0 9px; }
.btn { height: 19px; background: #2b2b2b; border-radius: 3px; display: flex; align-items: center; justify-content: space-between; padding: 0 3px; overflow: hidden; flex: none; box-shadow: 0 1px 1px #0003; }
.bord { border: 1px solid #404040; }
.btn em { flex: 1; padding-left: 6px; }
.seltool { width: 23px; height: 23px; margin: 0 15px 0 12px; }
.seg { display: flex; gap: 1px; border-radius: 3px; overflow: hidden; }
.seg span { width: 18px; height: 18px; background: #575757; display: grid; place-items: center; }
.seg svg { width: 15px; height: 15px; }
.on, .seg .on { background: #5680c2; }
.center { display: flex; gap: 7px; margin-left: 486px; }
.tog { background: #575757; height: 19px; width: 19px; margin-left: -3px; display: grid; place-items: center; }
.tog.on { background: #5680c2; }
.dim { background: #383838; }
.dim .chev { opacity: .6; }
.options { margin-left: auto; }
.w18{width:18px}.w19{width:19px}.w30{width:30px}.w32{width:32px}.w38{width:38px}.w38x{width:38px}.w44{width:44px}.w46{width:46px}.w50{width:50px}.w52{width:52px}.w57{width:57px}.w58{width:58px}.w61{width:61px}.w62{width:62px}.w64{width:64px}.w68{width:68px}.w69{width:69px}.w78{width:78px}.w80{width:80px}.w83{width:83px}.w108{width:108px}
.w38x { padding-right: 5px; }
.w19 { padding: 0 2px; }

.scene { position: relative; height: 878px; }
.canvas { position: absolute; inset: 0; width: 1585px; height: 878px; }
.minor { stroke: #4c4c4c; fill: none; stroke-width: 1.2; }
.major { stroke: #555; fill: none; stroke-width: 1.3; }
.axis-y { fill: none; stroke: #5f8529; stroke-width: 1.6; }
.axis-x { fill: none; stroke-width: 1.7; }
.month, .digits { font-family: Lato, sans-serif; font-weight: 700; fill: #f6dfec; stroke: #f0d0e2; stroke-width: .6; }
.frame-edge { fill: none; stroke: #9fc158; stroke-width: 2.8; }
.frame-core { fill: none; stroke: #e9f6b0; stroke-width: 1.8; }
.gizmo { stroke-width: 2; font-size: 11px; text-anchor: middle; }
.gizmo text { fill: #222c; }
.overlay { position: relative; }
.modehead { display: flex; gap: 2px; padding: 4px 8px 0 10px; height: 23px; }
.modehead > .w108 { margin-right: 5px; }
.mb { height: 19px; background: #323232; border-radius: 3px; display: grid; place-items: center; }
.modes { margin-left: auto; display: flex; gap: 7px; }
.shade { display: flex; gap: 0; border-radius: 3px; overflow: hidden; }
.shade span { width: 19px; height: 19px; background: #575757; display: grid; place-items: center; border-right: 1px solid #3c3c3c; }
.shade .on { background: #5680c2; }
.shade .dk { background: #2b2b2b; }
.under { display: flex; gap: 28px; padding: 12px 0 0 9px; }
.tools { display: flex; flex-direction: column; gap: 7px; }
.tg { display: flex; flex-direction: column; gap: 1px; border-radius: 3px; overflow: hidden; }
.tool { width: 40px; height: 33.5px; background: #303030; display: grid; place-items: center; position: relative; padding-right: 2px; }
.tool.on { background: #5680c2; }
.tool svg { width: 23px; height: 23px; }
.tool i { position: absolute; right: 2px; bottom: 2px; border: 2px solid transparent; border-right-color: #aaa; border-bottom-color: #aaa; }
.info { color: #fff; text-shadow: 1px 1px 2px #000; }
.info p { margin: 2px 0 9px; }

.timeline { height: 72px; border-radius: 5px; overflow: hidden; background: #383838; }
.tlhead { height: 25px; display: flex; align-items: center; padding: 1px 18px 0 9px; }
.pk { display: flex; margin-left: 6px; }
.pk .btn em { padding-left: 4px; }
.tlm.v { margin-left: 10px; width: 40px; }
.tlm.m { width: 46px; }
.play { display: flex; gap: 7px; margin-left: 443.5px; }
.rec, .transport span { height: 19px; background: #575757; display: grid; place-items: center; fill: #e6e6e6; }
.rec { width: 18px; border-radius: 3px; }
.rec svg, .transport svg { width: 15px; height: 15px; }
.transport { display: flex; gap: 1px; border-radius: 3px; overflow: hidden; }
.transport span { width: 18.9px; }
.frames { margin-left: auto; display: flex; gap: 7px; }
.cur { width: 73px; height: 19px; background: #585858; border-radius: 3px; display: grid; place-items: center; }
.range { display: flex; gap: 1px; border-radius: 3px; overflow: hidden; }
.range > span { background: #585858; height: 19px; display: flex; align-items: center; justify-content: space-between; }
.clock { width: 18px; padding: 0 1px; }
.clock svg { width: 16px; height: 16px; }
.rs { width: 87px; padding: 0 14px 0 15px; }
.re { width: 84px; padding: 0 15px 0 14px; }
.ruler text { font-size: 11.2px; fill: #a0a0a0; text-anchor: middle; }
.ruler .now { fill: #fff; }

.outliner { height: 313px; border-radius: 5px; overflow: hidden; background: #282828; }
.ohead { height: 25px; background: #383838; display: flex; align-items: center; padding: 0 9px; gap: 7px; }
.search { width: 109px; height: 19px; margin-left: 17px; background: #1c1c1c; border-radius: 3px; padding: 2px 4px; }
.filter { margin-left: auto; }
.newc { width: 18px; height: 19px; background: #4d4d4d; border-radius: 3px; display: grid; place-items: center; }
.tree { padding-top: 1px; background: linear-gradient(#777, #777) 29px 18px / 1px 400px no-repeat; }
.row { height: 20px; display: flex; align-items: center; padding-right: 10px; color: #c8c8c8; }
.row:first-child { height: 21px; padding-left: 22px; }
.row:nth-child(even) { background-color: #ffffff07; }
.row:first-child .ic { margin-right: 7px; color: #ddd; }
.row .dis { flex: none; width: 6px; height: 6px; border: 3px solid transparent; border-left: 6px solid #b8b8b8; border-right: 0; }
.row .dis.dn { border: 3px solid transparent; border-top: 6px solid #b8b8b8; border-bottom: 0; }
.row .link { width: 8px; height: 1px; background: #777; flex: none; }
.row .mi { width: 16px; height: 16px; color: #cf8445; padding: 0; }
.row .ob { width: 20px; height: 18px; display: grid; place-items: center; border-radius: 4px; flex: none; }
.row .ob.sel { background: #5a5a5a; }
.row .ob.sel .mi { color: #dd9358; }
.row .ob.cl { background: #444; color: #ddd; }
.row .nm { padding-left: 4px; }
.l1 .nm { padding-left: 3px; }
.row .di { width: 15px; height: 15px; color: #17b386; }
.row .ey { width: 13px; height: 11px; margin-left: auto; color: #ddd; margin-bottom: 2px; }
.l1 { padding-left: 27px; }
.l2 { padding-left: 46px; background-image: linear-gradient(#777, #777); background-size: 1px 20px; background-position: 49px 0; background-repeat: no-repeat; }
.chk { width: 11px; height: 11px; background: #ddd; border-radius: 2px; margin: 0 4px 0 12px; flex: none; }

.props { height: 662px; border-radius: 5px; overflow: hidden; background: #212121; display: flex; flex-direction: column; }
.phead { height: 25px; background: #383838; display: flex; align-items: center; padding: 0 10px 0 9px; flex: none; }
.obj { margin-left: 14px; color: #eee; }
.pname { margin-left: 9px; }
.pin { width: 15px; height: 15px; margin-left: auto; }
.pbody { flex: 1; display: flex; }
.ptabs { width: 28px; padding: 9px 0 0 2px; display: flex; flex-direction: column; gap: 2px; }
.ptabs span { height: 26px; background: #2b2b2b; border-radius: 3px 0 0 3px; display: grid; place-items: center; }
.ptabs .gap { margin-bottom: 8px; }
.ptabs span:nth-child(1) { height: 25px; margin-bottom: 8px; }
.ptabs span.on { margin-top: 1px; }
.ptabs .on { background: #424242; }
.ptabs svg { width: 15px; height: 15px; }
.cc { color: #ccc; }
.or { color: #ee9b56; }
.bl { color: #6b97d8; }
.gr { color: #17b386; }
.pk2 { color: #ca646e; }
.panels { flex: 1; background: #424242; display: flex; flex-direction: column; }
.namerow { display: flex; margin: 9px 8px 8px 9px; height: 19px; border: 1px solid #3a3a3a; border-radius: 3px; background: #1d1d1d; overflow: hidden; }
.namerow .pick { width: 30px; background: #2b2b2b; }
.field { padding: 3px 7px; }
.ph { height: 24px; display: flex; align-items: center; padding: 0 7px 0 9px; font-size: 12.3px; color: #d0d0d0; }
.ph.open { padding-top: 2px; }
.ph span { padding-left: 7px; flex: 1; }
.tri { border: 3px solid transparent; border-left: 6px solid #a8a8a8; border-right: 0; }
.tri.down { border: 3px solid transparent; border-top: 6px solid #a8a8a8; border-bottom: 0; }
.grip { width: 11px; height: 5px; color: #bbb; }
.tbody { background: #383838; height: 255px; padding-top: 9px; display: flex; flex-direction: column; gap: 6.4px; }
.grp { display: flex; flex-direction: column; gap: 1px; }
.fr { display: grid; grid-template-columns: 133px 113px 14px 1fr; align-items: center; height: 18.8px; }
.fr label { text-align: right; }
.fr .val { margin-left: 10px; width: 112px; height: 18.8px; background: #585858; display: grid; place-items: center; color: #e4e4e4; }
.fr .val.sel { background: #2b2b2b; display: flex; align-items: center; justify-content: space-between; padding: 0 2px 0 7px; border-radius: 3px; }
.grp .fr:first-child .val { border-radius: 3px 3px 0 0; }
.grp .fr:last-child .val { border-radius: 0 0 3px 3px; }
.grp .fr .val.sel { border-radius: 3px; }
.fr .lk { width: 14px; height: 12px; margin-left: 12px; color: #9a9a9a; }
.fr .pt { width: 4px; height: 4px; border-radius: 50%; background: #c8c8c8; margin-left: 24px; }
.delta { display: flex; align-items: center; gap: 7px; padding: 10px 0 0 23px; }
.plist { padding-top: 1px; }

.status { height: 18px; background: #303030; color: #a6a6a6; display: flex; align-items: center; padding: 1px 33px 0 11px; }
.status svg { width: 18px; height: 16px; }
.status span { display: flex; align-items: center; }
.s1 { width: 64px; gap: 6px; }
.s2 { width: 172px; gap: 7px; }
.s3 { width: 236px; gap: 5px; }
.status .stats { margin-left: auto; display: block; letter-spacing: .045px; }
```
FILE: app.js
```js
// Floor grid in perspective: every line is a ray from one of two vanishing points.
const VX = [342, 186], VY = [3979, 186], bottom = 958;
const unitX = 0.03336, unitY = 0.01335;
let minor = '', major = '';
const add = (vp, x, k) => {
  const seg = `M${vp[0]} ${vp[1]}L${x.toFixed(1)} ${bottom}`;
  if (k % 10) minor += seg; else major += seg;
};
for (let k = -160; k <= 240; k++) {
  if (k && (Math.abs(k) < 90 || k % 10 === 0)) add(VX, VX[0] + (bottom - VX[1]) * (334.5 + k * unitY * 3637) / 500, k);
}
for (let j = -400; j <= 30; j++) {
  if (j && (j > -90 || j % 10 === 0)) add(VY, VY[0] - (bottom - VY[1]) * (3302.5 - 3637 * j * unitX) / 500, j);
}
document.getElementById('minor').setAttribute('d', minor);
document.getElementById('major').setAttribute('d', major);

// Timeline ticks
let ticks = '';
for (let f = -5; f <= 255; f += 5) {
  const x = 112.4 + (f - 10) * 5.896;
  ticks += `<path d="M${x} 1009v24" stroke="${f === 250 ? '#111' : f % 10 ? '#3a3a3a' : '#2c2c2c'}"/>`;
  if (f > 0 && f % 10 === 0) ticks += `<text x="${x - 1.5}" y="1002.300">${f}</text>`;
}
document.getElementById('ticks').innerHTML = ticks;

// Outliner rows: [level, name, x of the mesh data icon]
const objects = [[2, 'Bar August', 1756], [2, 'Bar December', 1774], [2, 'Bar February', 1766], [2, 'Bar May', 1743], [2, 'Bar September', 1776], [2, 'Grid X_Y', 1744],
  [1, 'X_plot August', 1750], [1, 'X_plot December', 1768], [1, 'X_plot February', 1760], [1, 'X_plot May', 1737], [1, 'X_plot September', 1770], [1, 'y_plot 0', 1722], [1, 'y_plot 1', 1722]];
const use = (c, id) => `<svg class="${c}"><use href="#${id}"/></svg>`;
let rows = `<div class="row">${use('ic', 'coll')}<span>Scene Collection</span></div>
<div class="row l1"><i class="dis dn"></i><i class="chk"><svg viewBox="0 0 11 11"><path d="M2 5.500l2.500 2.500L9 3" fill="none" stroke="#222" stroke-width="1.600"/></svg></i><span class="ob cl">${use('ic', 'coll')}</span><span class="nm">Collection</span>${use('ey', 'eye')}</div>`;
for (const [level, name, x] of objects) {
  const width = x - 7.5 - 1588 - (level === 2 ? 80 : 61);
  rows += `<div class="row l${level}"><i class="dis"></i><i class="link"></i><span class="ob${name === 'X_plot August' ? ' sel' : ''}">${use('mi', 'mesh')}</span><span class="nm" style="width:${width}px">${name}</span>${use('di', 'data')}${use('ey', 'eye')}</div>`;
}
document.getElementById('tree').innerHTML = rows;

// Transform fields
const groups = [[['Location X', '0 m'], ['Y', '9 m'], ['Z', '-2.6939 m']], [['Rotation X', '90°'], ['Y', '90°'], ['Z', '90°']], [['Mode', 'XYZ Euler']], [['Scale X', '1.000'], ['Y', '1.000'], ['Z', '1.000']]];
document.getElementById('tbody').innerHTML = groups.map(g => '<div class="grp">' + g.map(([l, v]) =>
  `<div class="fr"><label>${l}</label>` + (l === 'Mode' ? `<span class="val sel">${v}${use('chev', 'chev')}</span><i></i>` : `<span class="val">${v}</span>${use('lk', 'lock')}`) + '<i class="pt"></i></div>').join('') + '</div>').join('') +
  '<div class="delta"><i class="tri"></i><span>Delta Transform</span></div>';
```
